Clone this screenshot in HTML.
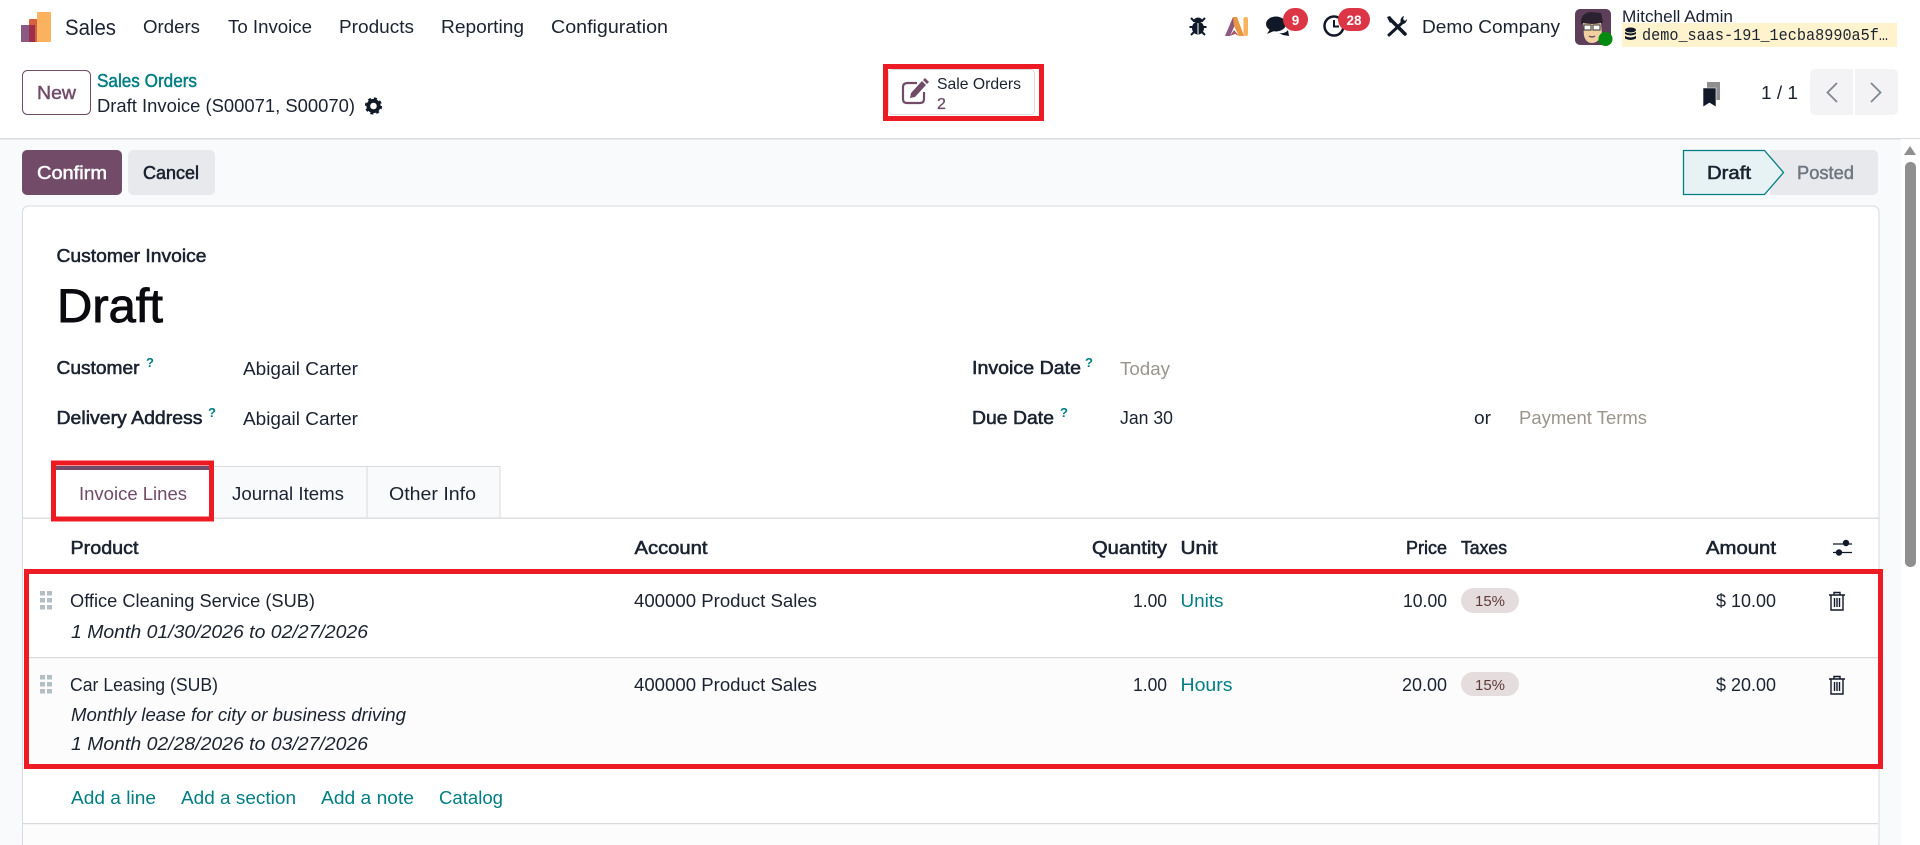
<!DOCTYPE html>
<html lang="en"><head><meta charset="utf-8"><title>Sales</title>
<style>
html,body{margin:0;padding:0;background:#f9fafb;width:1920px;height:845px;overflow:hidden}
svg{display:block}
text{font-family:"Liberation Sans",sans-serif;font-size:18px;fill:#1b2230}
.b{stroke:#1b2230;stroke-width:.55}
.t{fill:#017e84}
.i{font-style:italic}
.g{fill:#9a958c}
.q{font-size:13px;font-weight:bold;fill:#017e84}
</style></head><body>
<svg width="1920" height="845" viewBox="0 0 1920 845" xmlns="http://www.w3.org/2000/svg">
<rect width="1920" height="845" fill="#f9fafb"/>
<rect width="1920" height="138" fill="#fff"/>
<rect y="138" width="1920" height="1.5" fill="#d8dadd"/>
<rect x="1901" y="139" width="19" height="706" fill="#fff"/>
<path d="M1910 146l6 9h-12z" fill="#8f8f8f"/>
<rect x="1905" y="162" width="11" height="405" rx="5" fill="#8f8f8f"/>

<!-- logo -->
<rect x="21" y="25" width="14" height="17" fill="#8a5a82"/>
<rect x="29" y="19" width="14" height="23" rx="1" fill="#d9603f"/>
<rect x="37" y="12" width="14" height="30" rx="1" fill="#fbb25f"/>
<rect x="29" y="25" width="6" height="17" fill="#9c2f4e"/>
<text x="65" y="35" style="font-size:22px" textLength="51" lengthAdjust="spacingAndGlyphs">Sales</text>
<text x="143" y="33" textLength="57" lengthAdjust="spacingAndGlyphs">Orders</text>
<text x="228" y="33" textLength="84" lengthAdjust="spacingAndGlyphs">To Invoice</text>
<text x="339" y="33" textLength="75" lengthAdjust="spacingAndGlyphs">Products</text>
<text x="441" y="33" textLength="83" lengthAdjust="spacingAndGlyphs">Reporting</text>
<text x="551" y="33" textLength="117" lengthAdjust="spacingAndGlyphs">Configuration</text>

<!-- systray -->
<g fill="#111827">
<ellipse cx="1198" cy="28" rx="6" ry="6.500"/>
<path d="M1193 22a5 4.500 0 0 1 10 0z"/>
<path d="M1191 18l3.500 3.500M1205 18l-3.500 3.500M1189.500 27h17M1191 35l3-3M1205 35l-3-3" stroke="#111827" stroke-width="2" fill="none"/>
<rect x="1197.500" y="23" width="1" height="11" fill="#fff"/>
</g>
<path d="M1225 36l8-19h2.500l-1 9-4.500 10z" fill="#8c5a80"/>
<path d="M1233 17h4l7 19h-5l-5-10z" fill="#e8963f"/>
<path d="M1230 36l4-6 5 6-4-2z" fill="#a8566a"/>
<rect x="1243.500" y="17" width="4.500" height="19" rx="2" fill="#fbb25f"/>
<ellipse cx="1276" cy="24" rx="10" ry="7.500" fill="#111827"/>
<path d="M1270 29l-3 5 7-3z" fill="#111827"/>
<path d="M1279 33q6 1 9-3l1 6-6-1z" fill="#111827"/>
<circle cx="1334" cy="26" r="9.500" fill="#fff" stroke="#111827" stroke-width="2.500"/>
<path d="M1334 20v6.500h5" fill="none" stroke="#111827" stroke-width="2"/>
<rect x="1283" y="8" width="25" height="23" rx="11.500" fill="#dc3545"/>
<text x="1295.500" y="25" text-anchor="middle" style="font-size:13.500px;font-weight:bold;fill:#fff">9</text>
<rect x="1338" y="8" width="32" height="23" rx="11.500" fill="#dc3545"/>
<text x="1354" y="25" text-anchor="middle" style="font-size:13.500px;font-weight:bold;fill:#fff">28</text>
<path d="M1390 19l15 15" stroke="#111827" stroke-width="3.600" stroke-linecap="round"/>
<path d="M1403 22l-14 13" stroke="#111827" stroke-width="3" stroke-linecap="round"/>
<path d="M1387 17l3-1 3 4-3 3zM1401 23a5 5 0 0 1 3-7l-1 3 2 2 2-2a5 5 0 0 1-6 5z" fill="#111827"/>
<text x="1422" y="33" textLength="138" lengthAdjust="spacingAndGlyphs">Demo Company</text>

<!-- avatar -->
<rect x="1575" y="9" width="36" height="36" rx="5" fill="#5d3f5a"/>
<path d="M1581 24q-1-11 10-12l10 1 2 9-3 3-14-2z" fill="#2b2130"/>
<path d="M1583 23q8 2 18 0l1 12q-4 8-10 8t-8-7z" fill="#f2cfa0"/>
<rect x="1584" y="25" width="7" height="5" fill="#fff" stroke="#333" stroke-width="1"/>
<rect x="1593" y="25" width="7" height="5" fill="#fff" stroke="#333" stroke-width="1"/>
<path d="M1589 36q3 2 6 0" stroke="#5d3f5a" stroke-width="1.200" fill="none"/>
<circle cx="1605.500" cy="39" r="7" fill="#008a0e"/>
<text x="1622" y="22" textLength="111" lengthAdjust="spacingAndGlyphs" style="font-size:17px">Mitchell Admin</text>
<rect x="1622" y="23" width="275" height="24" fill="#fff3cd"/>
<g fill="#111827"><ellipse cx="1630.500" cy="30" rx="5.500" ry="2.500"/><path d="M1625 32q5.500 3 11 0v2q-5.500 3-11 0zM1625 36q5.500 3 11 0v2.500q-5.500 3-11 0z"/></g>
<text x="1642" y="40" textLength="246" lengthAdjust="spacingAndGlyphs" style="font-family:'Liberation Mono',monospace;font-size:16.500px">demo_saas-191_1ecba8990a5f…</text>

<!-- control panel -->
<rect x="22.500" y="70.500" width="68" height="44" rx="5" fill="#fff" stroke="#714b67"/>
<text x="37" y="99" style="fill:#714b67;stroke:#714b67;stroke-width:.45" textLength="39" lengthAdjust="spacingAndGlyphs">New</text>
<text x="97" y="87" class="t" style="stroke:#017e84;stroke-width:.45" textLength="100" lengthAdjust="spacingAndGlyphs">Sales Orders</text>
<text x="97" y="112" textLength="258" lengthAdjust="spacingAndGlyphs">Draft Invoice (S00071, S00070)</text>
<circle cx="373.500" cy="106" r="5.200" fill="none" stroke="#111827" stroke-width="3.800"/>
<circle cx="373.500" cy="106" r="7.600" fill="none" stroke="#111827" stroke-width="2" stroke-dasharray="3 3"/>

<rect x="886" y="67" width="155" height="51" fill="#fff"/>
<rect x="888.500" y="69.500" width="146" height="45" rx="4" fill="#fff" stroke="#d8dadd"/>
<path d="M917 83h-9q-5 0-5 4v12q0 4 4 4h13q4 0 4-4v-7" fill="none" stroke="#714b67" stroke-width="2.200"/>
<path d="M910 98l1-5 11-12 4 4-11 12z" fill="#714b67"/>
<path d="M923 80l2-2 4 4-2 2z" fill="#714b67"/>
<text x="937" y="89" style="font-size:16px" textLength="84" lengthAdjust="spacingAndGlyphs">Sale Orders</text>
<text x="937" y="109" style="font-size:16px;fill:#714b67;stroke:#714b67;stroke-width:.3">2</text>
<rect x="885.500" y="66.500" width="156" height="52" fill="none" stroke="#ed1c24" stroke-width="5"/>

<rect x="1707" y="82" width="13" height="18" fill="#8f8f8f"/>
<path d="M1703 88h13v19l-6.500-4-6.500 4z" fill="#111827" stroke="#fff" stroke-width=".6"/>
<text x="1761" y="99" textLength="37" lengthAdjust="spacingAndGlyphs">1 / 1</text>
<path d="M1853 69h-38a5 5 0 0 0-5 5v36a5 5 0 0 0 5 5h38z" fill="#f3f3f5"/>
<path d="M1855 69h38a5 5 0 0 1 5 5v36a5 5 0 0 1-5 5h-38z" fill="#f3f3f5"/>
<path d="M1837 83l-9.500 9.500 9.500 9.500" fill="none" stroke="#808790" stroke-width="1.800"/>
<path d="M1871 83l9.500 9.500-9.500 9.500" fill="none" stroke="#808790" stroke-width="1.800"/>

<!-- action bar -->
<rect x="22" y="150" width="100" height="45" rx="5" fill="#714b67"/>
<text x="37" y="179" style="fill:#fff;stroke:#fff;stroke-width:.5" textLength="70" lengthAdjust="spacingAndGlyphs">Confirm</text>
<rect x="128" y="150" width="87" height="45" rx="5" fill="#e7e9ed"/>
<text x="143" y="179" class="b" textLength="56" lengthAdjust="spacingAndGlyphs">Cancel</text>
<path d="M1770 150h103a5 5 0 0 1 5 5v35a5 5 0 0 1-5 5h-103z" fill="#e7e9ed"/>
<path d="M1683.500 150.500h81l19 22-19 22h-81z" fill="#e6f2f3" stroke="#017e84" stroke-width="1.300"/>
<text x="1707" y="179" class="b" textLength="44" lengthAdjust="spacingAndGlyphs">Draft</text>
<text x="1797" y="179" style="fill:#6e7681;stroke:#6e7681;stroke-width:.45" textLength="57" lengthAdjust="spacingAndGlyphs">Posted</text>

<!-- sheet -->
<path d="M22.500 845V212a6 6 0 0 1 6-6H1873a6 6 0 0 1 6 6V845z" fill="#fff" stroke="#d8dadd"/>
<text x="56.500" y="262" class="b" textLength="150" lengthAdjust="spacingAndGlyphs">Customer Invoice</text>
<text x="57" y="322" style="font-size:47px;fill:#0a0a0f;stroke:#0a0a0f;stroke-width:.9" textLength="106" lengthAdjust="spacingAndGlyphs">Draft</text>

<text x="56.500" y="374" class="b" textLength="83" lengthAdjust="spacingAndGlyphs">Customer</text>
<text x="146" y="367" class="q">?</text>
<text x="243" y="375" textLength="115" lengthAdjust="spacingAndGlyphs">Abigail Carter</text>
<text x="56.500" y="424" class="b" textLength="146" lengthAdjust="spacingAndGlyphs">Delivery Address</text>
<text x="208" y="417" class="q">?</text>
<text x="243" y="425" textLength="115" lengthAdjust="spacingAndGlyphs">Abigail Carter</text>

<text x="972" y="374" class="b" textLength="109" lengthAdjust="spacingAndGlyphs">Invoice Date</text>
<text x="1085" y="367" class="q">?</text>
<text x="1120" y="375" class="g" textLength="50" lengthAdjust="spacingAndGlyphs">Today</text>
<text x="972" y="424" class="b" textLength="82" lengthAdjust="spacingAndGlyphs">Due Date</text>
<text x="1060" y="417" class="q">?</text>
<text x="1120" y="424" textLength="53" lengthAdjust="spacingAndGlyphs">Jan 30</text>
<text x="1474" y="424" textLength="17" lengthAdjust="spacingAndGlyphs">or</text>
<text x="1519" y="424" class="g" textLength="128" lengthAdjust="spacingAndGlyphs">Payment Terms</text>

<!-- tabs -->
<rect x="22" y="517.500" width="1857" height="1.300" fill="#d8dadd"/>
<rect x="209.500" y="466.500" width="157.500" height="51.500" fill="#f9fafb" stroke="#d8dadd"/>
<rect x="367" y="466.500" width="133" height="51.500" fill="#f9fafb" stroke="#d8dadd"/>
<rect x="53" y="463" width="159" height="56" fill="#fff"/>
<rect x="56" y="466" width="153" height="4" fill="#714b67"/>
<rect x="53.500" y="463" width="158" height="56" fill="none" stroke="#ed1c24" stroke-width="5"/>
<text x="79" y="500" style="fill:#714b67" textLength="108" lengthAdjust="spacingAndGlyphs">Invoice Lines</text>
<text x="232" y="500" textLength="112" lengthAdjust="spacingAndGlyphs">Journal Items</text>
<text x="389" y="500" textLength="87" lengthAdjust="spacingAndGlyphs">Other Info</text>

<!-- table head -->
<text x="70.500" y="554" class="b" textLength="68" lengthAdjust="spacingAndGlyphs">Product</text>
<text x="634.500" y="554" class="b" textLength="73" lengthAdjust="spacingAndGlyphs">Account</text>
<text x="1092" y="554" class="b" textLength="75" lengthAdjust="spacingAndGlyphs">Quantity</text>
<text x="1180.500" y="554" class="b" textLength="37" lengthAdjust="spacingAndGlyphs">Unit</text>
<text x="1406" y="554" class="b" textLength="41" lengthAdjust="spacingAndGlyphs">Price</text>
<text x="1461" y="554" class="b" textLength="46" lengthAdjust="spacingAndGlyphs">Taxes</text>
<text x="1706" y="554" class="b" textLength="70" lengthAdjust="spacingAndGlyphs">Amount</text>
<path d="M1833 544h19M1833 552.500h19" stroke="#111827" stroke-width="1.300"/>
<circle cx="1846" cy="543" r="3.200" fill="#111827"/>
<circle cx="1839" cy="552.500" r="3.200" fill="#111827"/>

<!-- rows -->
<rect x="24" y="657.500" width="1855" height="107" fill="#fcfcfc"/>
<rect x="24" y="657" width="1855" height="1.200" fill="#d8dadd"/>
<g fill="#b4bec5">
<rect x="40" y="591" width="5" height="4.500"/><rect x="47" y="591" width="5" height="4.500"/><rect x="40" y="598" width="5" height="4.500"/><rect x="47" y="598" width="5" height="4.500"/><rect x="40" y="605" width="5" height="4.500"/><rect x="47" y="605" width="5" height="4.500"/>
<rect x="40" y="675" width="5" height="4.500"/><rect x="47" y="675" width="5" height="4.500"/><rect x="40" y="682" width="5" height="4.500"/><rect x="47" y="682" width="5" height="4.500"/><rect x="40" y="689" width="5" height="4.500"/><rect x="47" y="689" width="5" height="4.500"/>
</g>
<text x="70" y="607" textLength="245" lengthAdjust="spacingAndGlyphs">Office Cleaning Service (SUB)</text>
<text x="71" y="638" class="i" textLength="297" lengthAdjust="spacingAndGlyphs">1 Month 01/30/2026 to 02/27/2026</text>
<text x="634" y="607" textLength="183" lengthAdjust="spacingAndGlyphs">400000 Product Sales</text>
<text x="1133" y="607" textLength="34" lengthAdjust="spacingAndGlyphs">1.00</text>
<text x="1180.500" y="607" class="t" textLength="43" lengthAdjust="spacingAndGlyphs">Units</text>
<text x="1403" y="607" textLength="44" lengthAdjust="spacingAndGlyphs">10.00</text>
<rect x="1461" y="588" width="58" height="25" rx="12.500" fill="#e5dddd"/>
<text x="1475" y="606" style="font-size:15px;fill:#5f3a36" textLength="30" lengthAdjust="spacingAndGlyphs">15%</text>
<text x="1716" y="607" textLength="60" lengthAdjust="spacingAndGlyphs">$ 10.00</text>

<text x="70" y="691" textLength="148" lengthAdjust="spacingAndGlyphs">Car Leasing (SUB)</text>
<text x="71" y="721" class="i" textLength="335" lengthAdjust="spacingAndGlyphs">Monthly lease for city or business driving</text>
<text x="71" y="750" class="i" textLength="297" lengthAdjust="spacingAndGlyphs">1 Month 02/28/2026 to 03/27/2026</text>
<text x="634" y="691" textLength="183" lengthAdjust="spacingAndGlyphs">400000 Product Sales</text>
<text x="1133" y="691" textLength="34" lengthAdjust="spacingAndGlyphs">1.00</text>
<text x="1180.500" y="691" class="t" textLength="52" lengthAdjust="spacingAndGlyphs">Hours</text>
<text x="1402" y="691" textLength="45" lengthAdjust="spacingAndGlyphs">20.00</text>
<rect x="1461" y="672" width="58" height="24" rx="12" fill="#e5dddd"/>
<text x="1475" y="690" style="font-size:15px;fill:#5f3a36" textLength="30" lengthAdjust="spacingAndGlyphs">15%</text>
<text x="1716" y="691" textLength="60" lengthAdjust="spacingAndGlyphs">$ 20.00</text>

<g fill="none" stroke="#111827" stroke-width="1.400">
<path d="M1829 595h16M1834 595v-2.500h6v2.500M1831 595v15h12v-15M1834.500 598v9M1837 598v9M1839.500 598v9"/>
<path d="M1829 679h16M1834 679v-2.500h6v2.500M1831 679v15h12v-15M1834.500 682v9M1837 682v9M1839.500 682v9"/>
</g>

<rect x="26.500" y="571.500" width="1854" height="195" fill="none" stroke="#ed1c24" stroke-width="5"/>

<!-- add links -->
<text x="71" y="804" class="t" textLength="85" lengthAdjust="spacingAndGlyphs">Add a line</text>
<text x="181" y="804" class="t" textLength="115" lengthAdjust="spacingAndGlyphs">Add a section</text>
<text x="321" y="804" class="t" textLength="93" lengthAdjust="spacingAndGlyphs">Add a note</text>
<text x="439" y="804" class="t" textLength="64" lengthAdjust="spacingAndGlyphs">Catalog</text>
<rect x="23" y="823" width="1855" height="22" fill="#fcfcfc"/>
<rect x="23" y="823" width="1855" height="1.200" fill="#d8dadd"/>
</svg>
</body></html>
